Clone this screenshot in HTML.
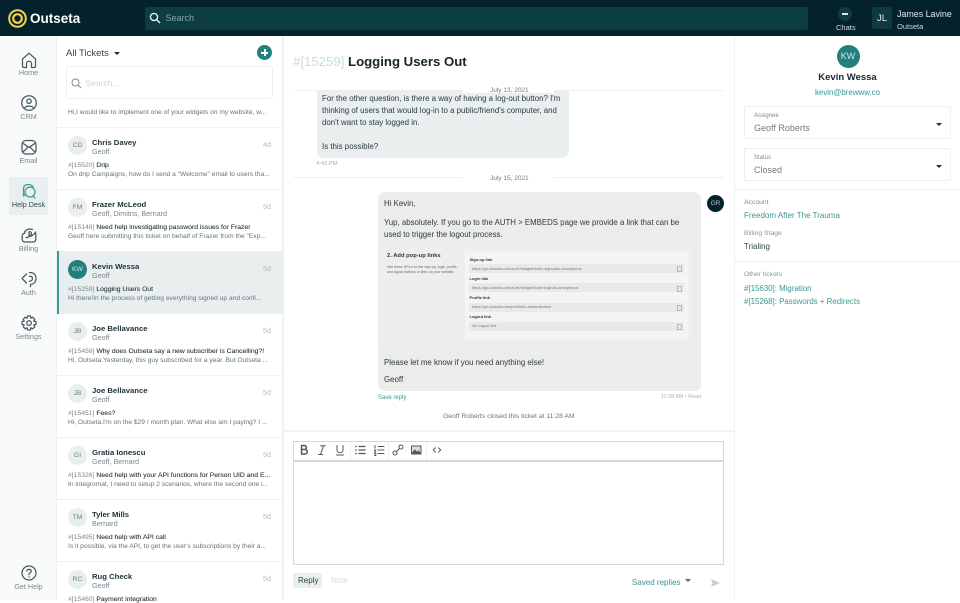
<!DOCTYPE html>
<html><head><meta charset="utf-8"><style>
html,body{margin:0;padding:0;width:960px;height:600px;overflow:hidden;background:#fff;font-family:"Liberation Sans",sans-serif;color:#1f2f36}
.a,.t{position:absolute;white-space:nowrap}
.t{line-height:1}
.nl{position:absolute;left:0;width:57px;text-align:center;font-size:7.2px;color:#7b868a;line-height:1}
.ni{position:absolute;left:20px;width:18px;height:18px;fill:none;stroke:#465a60;stroke-width:1.25;stroke-linecap:round;stroke-linejoin:round}
.item{position:absolute;left:57px;width:226px;height:62px;border-bottom:1px solid #eef1f1;box-sizing:border-box}
.av{position:absolute;left:11px;top:8px;width:19px;height:19px;border-radius:50%;background:#e9efef;color:#6f7f84;font-size:6.8px;line-height:19px;text-align:center}
.nm{position:absolute;left:35px;top:10.500px;font-size:7.7px;font-weight:bold;color:#1e3138;line-height:1;white-space:nowrap}
.as{position:absolute;left:35px;top:20px;font-size:7.2px;color:#7b878b;line-height:1;white-space:nowrap}
.d{position:absolute;right:12px;top:12.500px;font-size:7.2px;color:#b3bcbe;line-height:1}
.s{position:absolute;left:11px;top:34.500px;font-size:6.8px;color:#1f3037;line-height:1;white-space:nowrap;-webkit-text-stroke:.08px #1f3037}
.s i{font-style:normal;color:#7d8a8e;-webkit-text-stroke:0}
.p{position:absolute;left:11px;top:44px;font-size:6.65px;color:#667479;line-height:1;white-space:nowrap}
.box{position:absolute;left:744px;width:207px;height:33px;border:1px solid #eef0f0;box-sizing:border-box;border-radius:2px}
.car{position:absolute;width:0;height:0;border-left:3px solid transparent;border-right:3px solid transparent;border-top:3px solid #1d2e34}
.hr{position:absolute;background:#eef1f1;height:1px}
.li{position:absolute;background:#e9e9e9;height:9px;left:469px;width:215px}
.lab{position:absolute;left:469.500px;font-size:4px;font-weight:bold;color:#26363c;line-height:1}
.url{position:absolute;left:472px;font-size:3.900px;color:#777;line-height:1;white-space:nowrap}
.tb{position:absolute;top:443px;width:14px;height:14px;fill:none;stroke:#4a5a60;stroke-width:1;stroke-linecap:round;stroke-linejoin:round}
</style></head><body>

<!-- Top bar -->
<div class="a" style="left:0;top:0;width:960px;height:36px;background:#04222b"></div>
<svg class="a" style="left:8px;top:9px" width="19" height="19" viewBox="0 0 19 19" fill="none" stroke="#f3cf4f"><circle cx="9.500" cy="9.500" r="8.300" stroke-width="2"/><circle cx="9.500" cy="9.500" r="4.300" stroke-width="2.200"/></svg>
<div class="t" style="left:30px;top:12px;font-size:13.500px;font-weight:bold;color:#fff">Outseta</div>
<div class="a" style="left:145px;top:7px;width:663px;height:23px;background:#0b3d43;border-radius:2px"></div>
<svg class="a" style="left:149px;top:12px" width="12" height="12" viewBox="0 0 12 12" fill="none" stroke="#e6eeee" stroke-width="1.400"><circle cx="5" cy="5" r="3.600"/><path d="M7.700 7.700L11 11"/></svg>
<div class="t" style="left:165.500px;top:14px;font-size:9px;color:#8fa5a7">Search</div>
<div class="a" style="left:838px;top:7px;width:14px;height:14px;border-radius:50%;background:#0f3a41"></div>
<div class="a" style="left:842px;top:13px;width:6px;height:1.500px;background:#dfe8e8"></div>
<div class="t" style="left:836px;top:23.500px;font-size:7.500px;color:#d5dfe0">Chats</div>
<div class="a" style="left:872px;top:7px;width:20px;height:22px;background:#0f3a41;border-radius:2px"></div>
<div class="t" style="left:877px;top:14px;font-size:9.500px;color:#e8eeee">JL</div>
<div class="t" style="left:897px;top:10px;font-size:8.900px;color:#dfe7e8">James Lavine</div>
<div class="t" style="left:897px;top:23px;font-size:7.500px;color:#cdd8d9">Outseta</div>

<!-- Left nav -->
<div class="a" style="left:0;top:36px;width:57px;height:564px;background:#f9fafa;border-right:1px solid #eef1f1;box-sizing:border-box"></div>
<svg class="ni" style="top:51px" viewBox="0 0 18 18"><path d="M2.500 8L9 2.200L15.500 8V15C15.500 16 15 16.500 14 16.500H11.500V12.500C11.500 9.500 6.500 9.500 6.500 12.500V16.500H4C3 16.500 2.500 16 2.500 15Z"/></svg>
<div class="nl" style="top:69px">Home</div>
<svg class="ni" style="top:94px" viewBox="0 0 18 18"><circle cx="9" cy="9" r="7.300"/><circle cx="9" cy="7.200" r="2.200"/><path d="M4.800 13.800C5.500 11.500 12.500 11.500 13.200 13.800"/></svg>
<div class="nl" style="top:113px">CRM</div>
<svg class="ni" style="top:138px" viewBox="0 0 18 18"><rect x="2" y="2.500" width="14" height="13.500" rx="4"/><path d="M3 5.500C5 6 7 9 9 9S13 6 15 5.500M3 13.500C5 13 7 9 9 9S13 13 15 13.500"/></svg>
<div class="nl" style="top:157px">Email</div>
<div class="a" style="left:9px;top:177px;width:39px;height:38px;background:#e9efef;border-radius:2px"></div>
<svg class="ni" style="top:182px;stroke:#3d9a95" viewBox="0 0 18 18"><path d="M5 12.500L3.500 14V7.500C3.200 4.500 5 2.500 8 2.500C10.500 2.500 12.500 3.500 13.200 5.500"/><circle cx="10" cy="10" r="5"/><path d="M13 14L15 16.200"/></svg>
<div class="nl" style="top:201px;color:#33474e">Help Desk</div>
<svg class="ni" style="top:226px" viewBox="0 0 18 18"><path d="M5 7C3 7.500 2.200 8.500 2.200 10V13C2.200 15 3.500 16 5 16H13C15 16 15.800 15 15.800 13V7.500"/><path d="M4.500 6C6.500 3 10 2.500 12.500 3.500M6 11.500C8 12.500 10 9 9 7C8.500 5.500 10.500 5 11.200 6.500C11.800 8 11 9.500 9.500 10.500C11.500 10 14 9 15.500 6"/></svg>
<div class="nl" style="top:245px">Billing</div>
<svg class="ni" style="top:270px" viewBox="0 0 18 18"><path d="M9.500 2.500C13.500 2 16.300 5 16 9C15.700 12.500 13 14.500 10.500 14.500V16.500M9.500 6.500C11 5.800 12.500 7 12.500 8.500C12.500 10 11 11.200 9.500 11.200M6.500 4L2 8.500L6.500 13"/></svg>
<div class="nl" style="top:289px">Auth</div>
<svg class="ni" style="top:314px" viewBox="0 0 18 18"><circle cx="9" cy="9" r="2.300"/><path d="M7.600 2H10.400L10.900 4.200L12.700 3.200L14.800 5.300L13.800 7.100L16 7.600V10.400L13.800 10.900L14.800 12.700L12.700 14.800L10.900 13.800L10.400 16H7.600L7.100 13.800L5.300 14.800L3.200 12.700L4.200 10.900L2 10.400V7.600L4.200 7.100L3.200 5.300L5.300 3.200L7.100 4.200Z"/></svg>
<div class="nl" style="top:333px">Settings</div>
<svg class="ni" style="top:564px" viewBox="0 0 18 18"><circle cx="9" cy="9" r="7"/><path d="M6.800 7C7 4.800 11.200 4.800 11.200 7.200C11.200 8.800 9 8.800 9 10.600"/><path d="M9 12.800V13"/></svg>
<div class="nl" style="top:583px">Get Help</div>

<!-- Ticket list -->
<div class="a" style="left:282px;top:36px;width:2px;height:564px;background:#f0f2f2"></div>
<div class="t" style="left:66px;top:48.500px;font-size:9.500px;color:#33454c">All Tickets</div>
<div class="car" style="left:114px;top:52px"></div>
<div class="a" style="left:257px;top:45px;width:15px;height:15px;border-radius:50%;background:#237f7c"></div>
<div class="a" style="left:261px;top:51.500px;width:7px;height:2px;background:#fff"></div>
<div class="a" style="left:263.500px;top:49px;width:2px;height:7px;background:#fff"></div>
<div class="a" style="left:66px;top:66px;width:207px;height:33px;border:1px solid #eef0f0;border-radius:3px;box-sizing:border-box"></div>
<svg class="a" style="left:71px;top:78px" width="11" height="11" viewBox="0 0 11 11" fill="none" stroke="#7f9095" stroke-width="1"><circle cx="4.500" cy="4.500" r="3.500"/><path d="M7 7L10 10"/></svg>
<div class="t" style="left:85.500px;top:79px;font-size:8.500px;color:#cfd8da">Search...</div>
<div class="p" style="left:68px;top:110px">Hi,I would like to implement one of your widgets on my website, w...</div>
<div class="hr" style="left:57px;top:127px;width:226px"></div>

<div class="item" style="top:128px"><div class="av">CD</div><div class="nm">Chris Davey</div><div class="as">Geoff</div><div class="d">4d</div><div class="s"><i>#[15520]</i> Drip</div><div class="p">On drip Campaigns, how do I send a "Welcome" email to users tha...</div></div>
<div class="item" style="top:190px"><div class="av">FM</div><div class="nm">Frazer McLeod</div><div class="as">Geoff, Dimitris, Bernard</div><div class="d">5d</div><div class="s"><i>#[15148]</i> Need help investigating password issues for Frazer</div><div class="p">Geoff here submitting this ticket on behalf of Frazer from the "Exp...</div></div>
<div class="item" style="top:251px;height:63px;background:#e9efef"><div class="a" style="left:0;top:0;width:2px;height:63px;background:#3d9a95"></div><div class="av" style="top:9px;background:#237f7c;color:#d5e8e7">KW</div><div class="nm" style="top:11.500px">Kevin Wessa</div><div class="as" style="top:21px">Geoff</div><div class="d" style="top:13.500px">5d</div><div class="s" style="top:35.500px"><i>#[15259]</i> Logging Users Out</div><div class="p" style="top:45px">Hi there!In the process of getting everything signed up and confi...</div></div>
<div class="item" style="top:314px"><div class="av">JB</div><div class="nm">Joe Bellavance</div><div class="as">Geoff</div><div class="d">5d</div><div class="s"><i>#[15456]</i> Why does Outseta say a new subscriber is Cancelling?!</div><div class="p">Hi, Outseta.Yesterday, this guy subscribed for a year. But Outseta ...</div></div>
<div class="item" style="top:376px"><div class="av">JB</div><div class="nm">Joe Bellavance</div><div class="as">Geoff</div><div class="d">5d</div><div class="s"><i>#[15451]</i> Fees?</div><div class="p">Hi, Outseta.I'm on the $29 / month plan. What else am I paying? I ...</div></div>
<div class="item" style="top:438px"><div class="av">GI</div><div class="nm">Gratia Ionescu</div><div class="as">Geoff, Bernard</div><div class="d">5d</div><div class="s"><i>#[15326]</i> Need help with your API functions for Person UID and E...</div><div class="p">In integromat, I need to setup 2 scenarios, where the second one i...</div></div>
<div class="item" style="top:500px"><div class="av">TM</div><div class="nm">Tyler Mills</div><div class="as">Bernard</div><div class="d">5d</div><div class="s"><i>#[15495]</i> Need help with API call</div><div class="p">Is it possible, via the API, to get the user's subscriptions by their a...</div></div>
<div class="item" style="top:562px;height:38px;border:0"><div class="av">RC</div><div class="nm">Rug Check</div><div class="as">Geoff</div><div class="d">5d</div><div class="s"><i>#[15460]</i> Payment integration</div></div>

<!-- Conversation -->
<div class="t" style="left:293px;top:55px;font-size:13.200px;font-weight:bold"><span style="color:#c5dddc;font-weight:normal">#[15259]</span> <span style="color:#16252c">Logging Users Out</span></div>
<div class="hr" style="left:293px;top:90px;width:431px"></div>
<div class="a" style="left:317px;top:90px;width:252px;height:68px;background:#e9eeee;border-radius:0 0 7px 7px"></div>
<div class="a" style="left:463px;top:87px;width:91px;height:6px;background:#fff"></div>
<div class="t" style="left:490px;top:87.500px;font-size:6.500px;color:#6e7c80">July 13, 2021</div>
<div class="t" style="left:322px;top:92.500px;font-size:7.900px;color:#2b3b41;line-height:12.100px">For the other question, is there a way of having a log-out button? I'm<br>thinking of users that would log-in to a public/friend's computer, and<br>don't want to stay logged in.<br><br>Is this possible?</div>
<div class="t" style="left:316px;top:161.500px;font-size:5.800px;color:#a5afb2">4:43 PM</div>
<div class="hr" style="left:293px;top:177px;width:170px"></div><div class="hr" style="left:554px;top:177px;width:170px"></div>
<div class="t" style="left:490px;top:175.500px;font-size:6.500px;color:#6e7c80">July 15, 2021</div>
<div class="a" style="left:378px;top:192px;width:323px;height:199px;background:#ececec;border-radius:7px"></div>
<div class="t" style="left:384px;top:200px;font-size:7.900px;color:#2b3b41">Hi Kevin,</div>
<div class="t" style="left:384px;top:217px;font-size:7.850px;color:#2b3b41;line-height:12.200px">Yup, absolutely. If you go to the AUTH &gt; EMBEDS page we provide a link that can be<br>used to trigger the logout process.</div>
<div class="a" style="left:707px;top:195px;width:17px;height:17px;border-radius:50%;background:#04222b;color:#b9c6c9;font-size:6.500px;line-height:17px;text-align:center">GR</div>

<!-- Embedded image -->
<div class="a" style="left:380px;top:247px;width:312px;height:94px;background:#eeeeee"></div>
<div class="t" style="left:387px;top:253.500px;font-size:5.800px;font-weight:bold;color:#2c3c42">2. Add pop-up links</div>
<div class="t" style="left:387px;top:265px;font-size:3.500px;color:#667;line-height:4.500px">Use these URLs for the sign-up, login, profile,<br>and logout buttons or links on your website.</div>
<div class="a" style="left:465px;top:252px;width:223px;height:87px;background:#f4f4f4"></div>
<div class="lab" style="top:258px">Sign-up link</div><div class="li" style="top:264px"></div><div class="url" style="top:267px">https://go.outseta.com/auth?widgetMode=signup#o-anonymous</div>
<div class="lab" style="top:277px">Login link</div><div class="li" style="top:283px"></div><div class="url" style="top:286px">https://go.outseta.com/auth?widgetMode=login#o-anonymous</div>
<div class="lab" style="top:296px">Profile link</div><div class="li" style="top:303px"></div><div class="url" style="top:305px">https://go.outseta.com/profile#o-authenticated</div>
<div class="lab" style="top:315px">Logout link</div><div class="li" style="top:322px"></div><div class="url" style="top:324px">/#o-logout-link</div>
<div class="a" style="left:677px;top:266px;width:3px;height:4px;border:.7px solid #b5b9ba"></div>
<div class="a" style="left:677px;top:286px;width:3px;height:4px;border:.7px solid #b5b9ba"></div>
<div class="a" style="left:677px;top:305px;width:3px;height:4px;border:.7px solid #b5b9ba"></div>
<div class="a" style="left:677px;top:324px;width:3px;height:4px;border:.7px solid #b5b9ba"></div>

<div class="t" style="left:384px;top:358.500px;font-size:7.900px;color:#2b3b41">Please let me know if you need anything else!</div>
<div class="t" style="left:384px;top:376px;font-size:7.900px;color:#2b3b41">Geoff</div>
<div class="t" style="left:378px;top:395px;font-size:6px;color:#3a9792">Save reply</div>
<div class="t" style="left:661px;top:395px;font-size:5.400px;color:#a9b2b5">11:28 AM • Read</div>
<div class="t" style="left:443px;top:414px;font-size:6.800px;color:#69777c">Geoff Roberts closed this ticket at 11:28 AM</div>
<div class="a" style="left:283px;top:430px;width:451px;height:2px;background:#f2f4f4"></div>

<!-- Editor -->
<div class="a" style="left:293px;top:441px;width:431px;height:124px;border:1px solid #d5d8d9;box-sizing:border-box;background:#fff"></div>
<div class="a" style="left:293px;top:460px;width:431px;height:1.500px;background:#d5d8d9"></div>
<div class="a" style="left:350px;top:442px;width:1px;height:18px;background:#eef0f0"></div>
<div class="a" style="left:388px;top:442px;width:1px;height:18px;background:#eef0f0"></div>
<div class="a" style="left:426px;top:442px;width:1px;height:18px;background:#eef0f0"></div>
<svg class="tb" style="left:297px" viewBox="0 0 14 14"><path d="M4.500 2.500H7.500C10 2.500 10 6.500 7.500 6.500H4.500ZM4.500 6.500H8C11 6.500 11 11 8 11H4.500Z" stroke-width="1.500"/></svg>
<svg class="tb" style="left:315px" viewBox="0 0 14 14"><path d="M5.500 2.800H10.500M8.500 2.800L5.500 11.500M3.500 11.500H7.500"/></svg>
<svg class="tb" style="left:333px" viewBox="0 0 14 14"><path d="M4 2.500V7C4 10.500 10 10.500 10 7V2.500M3.500 12H10.500"/></svg>
<svg class="tb" style="left:353px" viewBox="0 0 14 14"><path d="M6 3.500H12M6 7H12M6 10.500H12M2.700 3.500H3.200M2.700 7H3.200M2.700 10.500H3.200" stroke-width="1.300"/></svg>
<svg class="tb" style="left:372px" viewBox="0 0 14 14"><path d="M6 3.500H12M6 7H12M6 10.500H12M3 2.500V5M2.500 7H3.800L2.500 9H3.800M2.500 10.500H3.800V12.500H2.500"/></svg>
<svg class="tb" style="left:391px" viewBox="0 0 14 14"><circle cx="4" cy="10" r="2"/><circle cx="10" cy="4" r="2"/><path d="M5.500 8.500L8.500 5.500"/></svg>
<svg class="tb" style="left:409px" viewBox="0 0 14 14"><rect x="2.500" y="3" width="9.500" height="8" fill="#d9dcdc"/><path d="M3 10.500L6 7L8 9.500L9.500 8L11.500 10.500Z" fill="#4a5a60"/></svg>
<svg class="tb" style="left:429.500px" viewBox="0 0 14 14"><path d="M5.500 4.800L3.300 7L5.500 9.200M8.500 4.800L10.700 7L8.500 9.200"/></svg>

<div class="a" style="left:293px;top:573px;width:29px;height:15px;background:#e9efef;border-radius:2px"></div>
<div class="t" style="left:298px;top:577px;font-size:8px;color:#2c3d43">Reply</div>
<div class="t" style="left:331px;top:577px;font-size:8px;color:#cfe0df">Note</div>
<div class="t" style="left:632px;top:578.500px;font-size:8px;color:#3a9792">Saved replies</div>
<div class="car" style="left:685px;top:578.500px;border-top-color:#237f7c"></div>
<svg class="a" style="left:711px;top:579px" width="9" height="8" viewBox="0 0 9 8" fill="#c6cdcf"><path d="M0 0L9 4L0 8L1.500 4Z"/></svg>
<div class="a" style="left:734px;top:36px;width:1px;height:564px;background:#eef1f1"></div>

<!-- Right panel -->
<div class="a" style="left:836.500px;top:45px;width:23px;height:23px;border-radius:50%;background:#237f7c;color:#cfe5e4;font-size:9px;line-height:23px;text-align:center">KW</div>
<div class="a" style="left:735px;width:225px;top:72px;text-align:center;font-size:9.500px;font-weight:bold;color:#152a31">Kevin Wessa</div>
<div class="a" style="left:735px;width:225px;top:88px;text-align:center;font-size:7.900px;color:#3a9792">kevin@brewww.co</div>
<div class="box" style="top:106px"></div>
<div class="t" style="left:754px;top:112.500px;font-size:6px;color:#7e8a8e">Assignee</div>
<div class="t" style="left:754px;top:123.500px;font-size:9px;color:#6f7c80">Geoff Roberts</div>
<div class="car" style="left:936px;top:123px"></div>
<div class="box" style="top:148px"></div>
<div class="t" style="left:754px;top:154.500px;font-size:6px;color:#7e8a8e">Status</div>
<div class="t" style="left:754px;top:165.500px;font-size:9px;color:#6f7c80">Closed</div>
<div class="car" style="left:936px;top:165px"></div>
<div class="hr" style="left:735px;top:189px;width:225px"></div>
<div class="t" style="left:744px;top:200px;font-size:6.800px;color:#7e8a8e">Account</div>
<div class="t" style="left:744px;top:211.500px;font-size:8px;color:#3a9792">Freedom After The Trauma</div>
<div class="t" style="left:744px;top:231px;font-size:6.800px;color:#8b9599">Billing Stage</div>
<div class="t" style="left:744px;top:242.500px;font-size:8px;color:#33454c">Trialing</div>
<div class="hr" style="left:735px;top:261px;width:225px"></div>
<div class="t" style="left:744px;top:271.500px;font-size:6.800px;color:#8b9599">Other tickets</div>
<div class="t" style="left:744px;top:285px;font-size:7.900px;color:#3a9792">#[15630]: Migration</div>
<div class="t" style="left:744px;top:298px;font-size:7.900px;color:#3a9792">#[15268]: Passwords + Redirects</div>
</body></html>
